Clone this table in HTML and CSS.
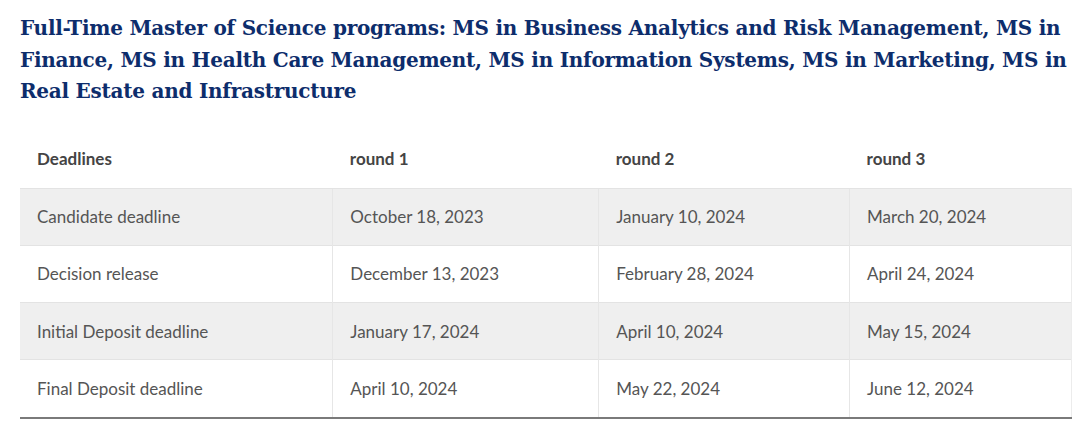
FILE: index.html
```html
<!DOCTYPE html>
<html lang="en">
<head>
<meta charset="utf-8">
<title>Deadlines</title>
<link rel="stylesheet" href="styles.css">
</head>
<body>
<main class="page">
  <h2 class="title">Full-Time Master of Science programs: MS in Business Analytics and Risk Management, MS in Finance, MS in Health Care Management, MS in Information Systems, MS in Marketing, MS in Real Estate and Infrastructure</h2>
  <table class="deadlines">
    <colgroup>
      <col class="c1"><col class="c2"><col class="c3"><col class="c4">
    </colgroup>
    <thead>
      <tr><th>Deadlines</th><th>round 1</th><th>round 2</th><th>round 3</th></tr>
    </thead>
    <tbody>
      <tr class="shade"><td>Candidate deadline</td><td>October 18, 2023</td><td>January 10, 2024</td><td>March 20, 2024</td></tr>
      <tr><td>Decision release</td><td>December 13, 2023</td><td>February 28, 2024</td><td>April 24, 2024</td></tr>
      <tr class="shade"><td>Initial Deposit deadline</td><td>January 17, 2024</td><td>April 10, 2024</td><td>May 15, 2024</td></tr>
      <tr><td>Final Deposit deadline</td><td>April 10, 2024</td><td>May 22, 2024</td><td>June 12, 2024</td></tr>
    </tbody>
  </table>
</main>
</body>
</html>
```
FILE: styles.css
```css
html, body {
  margin: 0;
  padding: 0;
  background: #ffffff;
}
.page {
  padding: 13px 0 0 20px;
  width: 1052px;
}
.title {
  margin: 0;
  font-family: "DejaVu Serif", serif;
  font-weight: bold;
  font-size: 20px;
  letter-spacing: -0.25px;
  line-height: 31.5px;
  color: #0d2d6c;
  width: 1052px;
}
.deadlines {
  margin-top: 22px;
  width: 1052px;
  border-collapse: collapse;
  font-family: "Lato", "Noto Sans", sans-serif;
  font-size: 17px;
  color: #555555;
  border-bottom: 2px solid #7a7a7a;
}
.c1 { width: 313px; }
.c2 { width: 266px; }
.c3 { width: 251px; }
.c4 { width: 222px; }
.deadlines th {
  text-align: left;
  font-weight: bold;
  color: #444444;
  height: 58px;
  padding: 0 17px;
  vertical-align: middle;
}
.deadlines td {
  height: 56.3px;
  padding: 0 17px;
  vertical-align: middle;
  border-top: 1px solid #e3e3e3;
  border-left: 1px solid #e6e6e6;
}
.deadlines td:first-child {
  border-left: none;
}
.deadlines td:last-child {
  border-right: 1px solid #ececec;
}
.shade td {
  background: #efefef;
}
```
